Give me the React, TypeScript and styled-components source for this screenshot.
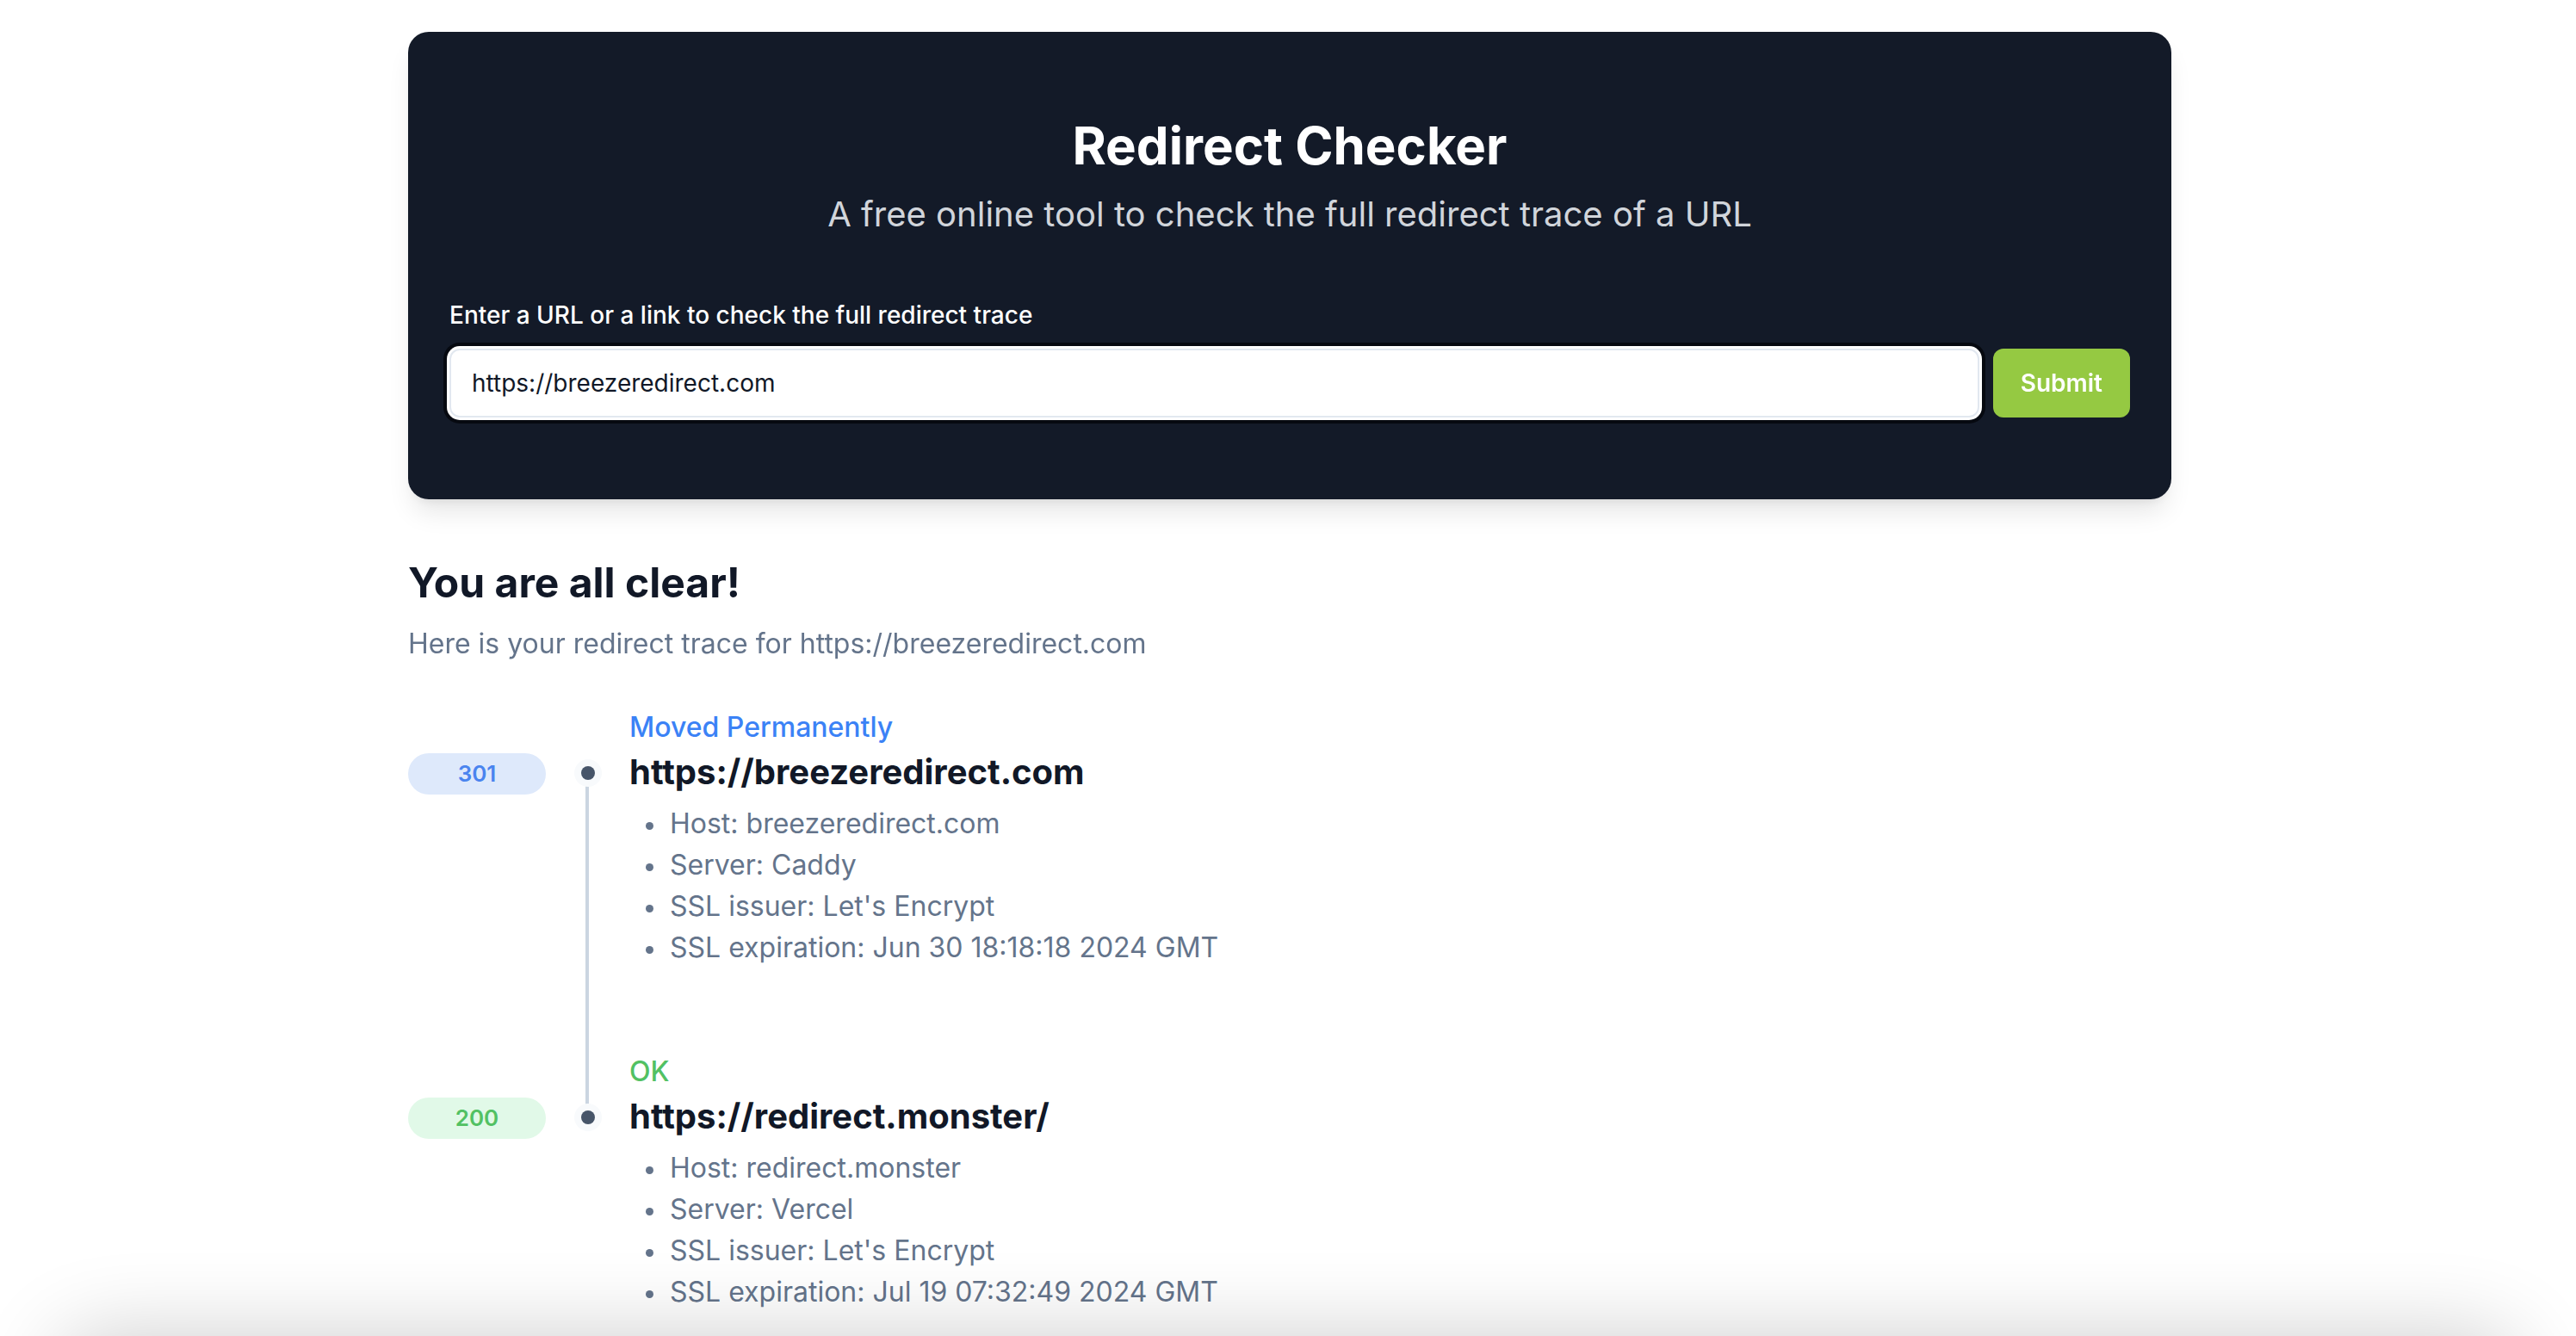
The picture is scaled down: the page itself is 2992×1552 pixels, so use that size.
import { useEffect, useRef } from "react";
import styled, { createGlobalStyle } from "styled-components";

type Hop = {
  code: number;
  status: string;
  url: string;
  host: string;
  server: string;
  issuer: string;
  expires: string;
};

const hops: Hop[] = [
  {
    code: 301,
    status: "Moved Permanently",
    url: "https://breezeredirect.com",
    host: "breezeredirect.com",
    server: "Caddy",
    issuer: "Let's Encrypt",
    expires: "Jun 30 18:18:18 2024 GMT",
  },
  {
    code: 200,
    status: "OK",
    url: "https://redirect.monster/",
    host: "redirect.monster",
    server: "Vercel",
    issuer: "Let's Encrypt",
    expires: "Jul 19 07:32:49 2024 GMT",
  },
];

const App = () => {
  const inputRef = useRef<HTMLInputElement>(null);

  useEffect(() => {
    const el = inputRef.current;
    if (el) {
      el.focus();
      el.setSelectionRange(8, 8);
    }
  }, []);

  return (
    <>
      <GlobalStyle />
      <Page>
        <Hero>
          <Title>Redirect Checker</Title>
          <Subtitle>
            A free online tool to check the full redirect trace of a URL
          </Subtitle>
          <Form onSubmit={(e) => e.preventDefault()}>
            <Label htmlFor="url">
              Enter a URL or a link to check the full redirect trace
            </Label>
            <InputRow>
              <UrlInput
                id="url"
                ref={inputRef}
                defaultValue="https://breezeredirect.com"
              />
              <SubmitButton type="submit">Submit</SubmitButton>
            </InputRow>
          </Form>
        </Hero>

        <Results>
          <Heading>You are all clear!</Heading>
          <Lead>Here is your redirect trace for https://breezeredirect.com</Lead>

          <Trace>
            {hops.map((hop, i) => {
              const ok = hop.code < 300;
              return (
                <Entry key={hop.url} $last={i === hops.length - 1}>
                  <Status $ok={ok}>{hop.status}</Status>
                  <Badge $ok={ok}>{hop.code}</Badge>
                  <Dot />
                  <HopUrl>{hop.url}</HopUrl>
                  <Details>
                    <Detail>Host: {hop.host}</Detail>
                    <Detail>Server: {hop.server}</Detail>
                    <Detail>SSL issuer: {hop.issuer}</Detail>
                    <Detail>SSL expiration: {hop.expires}</Detail>
                  </Details>
                </Entry>
              );
            })}
          </Trace>
        </Results>
      </Page>
      <BottomShelf />
    </>
  );
};

export default App;

const GlobalStyle = createGlobalStyle`
  html, body {
    margin: 0;
    padding: 0;
    background: #ffffff;
    overflow: hidden;
  }
  body {
    padding-left: 4px;
    font-family: Inter, "Noto Sans", "Liberation Sans", sans-serif;
    color: #111827;
  }
  * {
    box-sizing: border-box;
  }
`;

const Page = styled.main`
  width: 2048px;
  margin: 37px auto 0;
`;

const Hero = styled.section`
  background: #131a28;
  border-radius: 24px;
  padding: 96px 48px 95px;
  box-shadow: 0 20px 30px -6px rgba(0, 0, 0, 0.1),
    0 8px 12px -8px rgba(0, 0, 0, 0.1);
  text-align: center;
`;

const Title = styled.h1`
  margin: 0;
  font-size: 60px;
  line-height: 72px;
  font-weight: 700;
  color: #ffffff;
`;

const Subtitle = styled.p`
  margin: 16px 0 0;
  font-size: 40px;
  line-height: 56px;
  color: #d1d5db;
`;

const Form = styled.form`
  margin-top: 69px;
  text-align: left;
`;

const Label = styled.label`
  display: block;
  font-size: 28px;
  line-height: 40px;
  font-weight: 500;
  color: #ffffff;
  margin-bottom: 19px;
`;

const InputRow = styled.div`
  display: flex;
  align-items: center;
  gap: 16px;
`;

const UrlInput = styled.input`
  flex: 1;
  height: 80px;
  padding: 0 24px;
  border: 2px solid #e2e8f0;
  border-radius: 12px;
  background: #ffffff;
  font-family: inherit;
  font-size: 28px;
  color: #111827;
  caret-color: #111827;
  outline: none;
  box-shadow: 0 0 0 3px #ffffff, 0 0 0 7px #060910;
`;

const SubmitButton = styled.button`
  height: 80px;
  padding: 0 32px;
  border: none;
  border-radius: 12px;
  background: #95c942;
  color: #ffffff;
  font-family: inherit;
  font-size: 28px;
  font-weight: 600;
  cursor: pointer;
`;

const Results = styled.section`
  margin-top: 65px;
`;

const Heading = styled.h2`
  margin: 0;
  font-size: 48px;
  line-height: 64px;
  font-weight: 700;
  color: #111827;
`;

const Lead = styled.p`
  margin: 15px 0 0;
  font-size: 32px;
  line-height: 48px;
  color: #64748b;
`;

const Trace = styled.ol`
  list-style: none;
  margin: 49px 0 0;
  padding: 0;
`;

const Entry = styled.li<{ $last?: boolean }>`
  position: relative;
  display: grid;
  grid-template-columns: 160px 97px 1fr;
  grid-template-areas:
    ". . status"
    "badge dot url"
    ". . details";
  padding-bottom: 96px;

  &::before {
    content: "";
    display: ${({ $last }) => ($last ? "none" : "block")};
    position: absolute;
    left: 206px;
    top: 77px;
    width: 4px;
    height: 100%;
    background: #cbd5e1;
  }
`;

const Status = styled.div<{ $ok: boolean }>`
  grid-area: status;
  font-size: 32px;
  line-height: 48px;
  font-weight: 500;
  color: ${({ $ok }) => ($ok ? "#52c163" : "#3b82f6")};
`;

const Badge = styled.span<{ $ok: boolean }>`
  grid-area: badge;
  align-self: center;
  margin-top: 3px;
  height: 48px;
  border-radius: 999px;
  display: flex;
  align-items: center;
  justify-content: center;
  font-size: 26px;
  font-weight: 600;
  background: ${({ $ok }) => ($ok ? "#e1f9e8" : "#dee9fb")};
  color: ${({ $ok }) => ($ok ? "#52c163" : "#4a84ef")};
`;

const Dot = styled.span`
  grid-area: dot;
  align-self: center;
  justify-self: center;
  margin-top: 2px;
  position: relative;
  z-index: 1;
  width: 16px;
  height: 16px;
  border-radius: 50%;
  background: #475569;
  box-shadow: 0 0 0 8px #f8fafc;
`;

const HopUrl = styled.h3`
  grid-area: url;
  margin: 0;
  font-size: 40px;
  line-height: 56px;
  font-weight: 700;
  color: #111827;
`;

const Details = styled.ul`
  grid-area: details;
  list-style: none;
  margin: 8px 0 0;
  padding: 0;
`;

const Detail = styled.li`
  font-size: 32px;
  line-height: 48px;
  color: #64748b;

  &::before {
    content: "";
    display: inline-block;
    width: 9px;
    height: 9px;
    margin: 0 19px;
    border-radius: 50%;
    background: currentColor;
    vertical-align: middle;
  }
`;

const BottomShelf = styled.div`
  position: fixed;
  left: 70px;
  right: 70px;
  top: 100vh;
  height: 200px;
  border-radius: 40px;
  background: #e6e6e6;
  box-shadow: 0 0 100px rgba(0, 0, 0, 0.2);
`;
